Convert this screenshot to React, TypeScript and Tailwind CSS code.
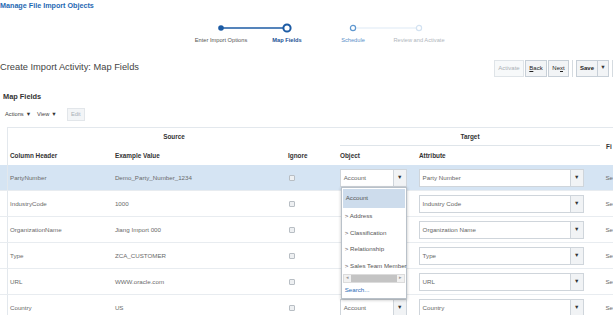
import React from 'react'

const font = { fontFamily: "'Liberation Sans', Arial, sans-serif" }

type Row = { header: string; example: string; object: string; attribute: string }

const rows: Row[] = [
  { header: 'PartyNumber', example: 'Demo_Party_Number_1234', object: 'Account', attribute: 'Party Number' },
  { header: 'IndustryCode', example: '1000', object: '', attribute: 'Industry Code' },
  { header: 'OrganizationName', example: 'Jiang Import 000', object: '', attribute: 'Organization Name' },
  { header: 'Type', example: 'ZCA_CUSTOMER', object: '', attribute: 'Type' },
  { header: 'URL', example: 'WWW.oracle.com', object: '', attribute: 'URL' },
  { header: 'Country', example: 'US', object: 'Account', attribute: 'Country' },
]

function Caret() {
  return <span className="text-[5.5px] leading-none text-[#333]">▼</span>
}

function Select({ value, width }: { value: string; width: string }) {
  return (
    <div className={`flex h-[18px] ${width}`}>
      <div className="flex-1 flex items-center pl-[3px] bg-white border border-[#cfd5db] text-[6.2px] text-[#666] whitespace-nowrap overflow-hidden">
        {value}
      </div>
      <div className="w-[13px] flex items-center justify-center bg-[#f1f3f5] border border-l-0 border-[#cfd5db]">
        <Caret />
      </div>
    </div>
  )
}

function Train() {
  return (
    <div className="ml-[188px] mt-[10px]">
      <svg width="264" height="12" viewBox="0 0 264 12">
        <defs>
          <linearGradient id="fade" x1="0" x2="1" y1="0" y2="0">
            <stop offset="0" stopColor="#2d6cb3" />
            <stop offset="1" stopColor="#c3d8ee" />
          </linearGradient>
        </defs>
        <line x1="33" y1="6" x2="95" y2="6" stroke="#1c5ba4" strokeWidth="1.6" />
        <line x1="103" y1="6" x2="162" y2="6" stroke="url(#fade)" strokeWidth="1.4" />
        <line x1="168" y1="6" x2="228" y2="6" stroke="#dde9f5" strokeWidth="1.2" />
        <circle cx="33" cy="6" r="2.8" fill="#1c5ba4" />
        <circle cx="99" cy="6" r="3.6" fill="white" stroke="#1c5ba4" strokeWidth="2" />
        <circle cx="165" cy="6" r="2.6" fill="white" stroke="#5f98d0" strokeWidth="1.2" />
        <circle cx="231" cy="6" r="2.6" fill="white" stroke="#d3e2f1" strokeWidth="1.2" />
      </svg>
      <div className="flex h-[12px] items-center text-[5.7px]">
        <div className="w-[66px] flex justify-center whitespace-nowrap text-[#555]">Enter Import Options</div>
        <div className="w-[66px] flex justify-center whitespace-nowrap font-bold text-[#1d5295]">Map Fields</div>
        <div className="w-[66px] flex justify-center whitespace-nowrap text-[#5b92c9]">Schedule</div>
        <div className="w-[66px] flex justify-center whitespace-nowrap text-[#b0b6bc]">Review and Activate</div>
      </div>
    </div>
  )
}

function Btn({ children, className = '' }: { children: React.ReactNode; className?: string }) {
  return (
    <div className={`h-[17px] flex items-center justify-center border border-[#c7cfd7] bg-[#f2f4f6] text-[6px] ${className}`}>
      {children}
    </div>
  )
}

function Dropdown() {
  const items = ['> Address', '> Classification', '> Relationship', '> Sales Team Member']
  return (
    <div className="absolute left-[1px] top-[18px] w-[66px] bg-white border border-[#b9c1c9] shadow-[0_1px_3px_rgba(0,0,0,0.25)] z-10 text-[6.2px] text-[#555]">
      <div className="h-[19px] flex items-center pl-[3px] bg-[#cddcec] m-[1px] mb-0">Account</div>
      {items.map(i => (
        <div key={i} className="h-[16.5px] flex items-center pl-[3px] whitespace-nowrap">{i}</div>
      ))}
      <div className="h-[9px] mx-[1px] flex items-center bg-[#f1f1f1] border border-[#dcdcdc]">
        <span className="w-[7px] text-[5px] text-[#999] text-center">◂</span>
        <div className="flex-1 h-[7px] bg-[#c4c4c4]" />
        <span className="w-[7px] text-[5px] text-[#999] text-center">▸</span>
      </div>
      <div className="h-[15px] flex items-center pl-[3px] text-[#2a6cb6]">Search...</div>
    </div>
  )
}

export default function App() {
  return (
    <div className="w-[613px] h-[315px] overflow-hidden bg-white relative" style={font}>
      <div className="h-[12px] leading-[12px] text-[7.2px] font-bold text-[#1f69b3] whitespace-nowrap">
        Manage File Import Objects
      </div>

      <Train />

      <div className="mt-[11px] h-[22px] flex items-center">
        <div className="text-[9.3px] text-[#444] whitespace-nowrap">Create Import Activity: Map Fields</div>
        <div className="ml-auto flex items-center">
          <Btn className="w-[30px] text-[#aab0b6] bg-[#f7f9fa] border-[#dfe4e8]">Activate</Btn>
          <Btn className="w-[22px] ml-[1px] text-[#222]"><span><u>B</u>ack</span></Btn>
          <Btn className="w-[21px] ml-[1px] text-[#222]"><span>Ne<u>x</u>t</span></Btn>
          <div className="w-px h-[17px] bg-[#d5dbe0] mx-[3px]" />
          <Btn className="w-[22px] text-[#222] font-bold">Save</Btn>
          <Btn className="w-[11px] border-l-0"><Caret /></Btn>
          <div className="w-px h-[17px] bg-[#d5dbe0] ml-[3px]" />
        </div>
      </div>

      <div className="mt-[11px] h-[14px] leading-[14px] pl-[3px] text-[7.4px] font-bold text-[#333]">Map Fields</div>

      <div className="mt-[2px] h-[17px] flex items-center pl-[5px] text-[5.7px] text-[#444]">
        <span className="flex items-center gap-[2px]">Actions <Caret /></span>
        <span className="flex items-center gap-[2px] ml-[6px]">View <Caret /></span>
        <div className="ml-[10px] w-[18px] h-[13px] flex items-center justify-center bg-[#f3f5f7] border border-[#e2e6ea] text-[#aab0b6]">Edit</div>
      </div>

      <div className="mt-[4px]">
        <div className="flex h-[38px]">
          <div className="w-[8px] border-r border-[#e3e8ed]" />
          <div className="w-[598px] border-t border-[#e3e8ed] text-[6.4px] font-bold text-[#333]">
            <div className="flex h-[18px]">
              <div className="w-[332px] flex items-center justify-center">Source</div>
              <div className="w-[260px] flex items-center justify-center border-b border-[#dfe5ea]">Target</div>
            </div>
            <div className="flex h-[19px] items-center">
              <div className="w-[107px] pl-[2px]">Column Header</div>
              <div className="w-[173px]">Example Value</div>
              <div className="w-[52px]">Ignore</div>
              <div className="w-[79px]">Object</div>
              <div className="w-[187px]">Attribute</div>
            </div>
          </div>
          <div className="flex-1 border-t border-[#e3e8ed] flex items-center text-[6.4px] font-bold text-[#333] whitespace-nowrap">
            Fi
          </div>
        </div>

        {rows.map((r, idx) => (
          <div
            key={r.header}
            className={`flex h-[26px] items-center border-b border-[#e8ecf0] text-[6.2px] text-[#6a6a6a] ${idx === 0 ? 'bg-[#d5e4f3]' : ''}`}
          >
            <div className="w-[8px] h-full border-r border-[#e3e8ed]" />
            <div className="w-[107px] pl-[2px] whitespace-nowrap">{r.header}</div>
            <div className="w-[173px] whitespace-nowrap">{r.example}</div>
            <div className="w-[52px]">
              <div className="ml-[1px] w-[6px] h-[6px] rounded-[1px] border border-[#b8bec4] bg-[#eef0f2]" />
            </div>
            <div className="w-[79px] relative">
              {r.object && <Select value={r.object} width="w-[67px]" />}
              {idx === 0 && <Dropdown />}
            </div>
            <div className="w-[187px]">
              <Select value={r.attribute} width="w-[165px]" />
            </div>
            <div className="flex-1 whitespace-nowrap">Se</div>
          </div>
        ))}
      </div>
    </div>
  )
}
